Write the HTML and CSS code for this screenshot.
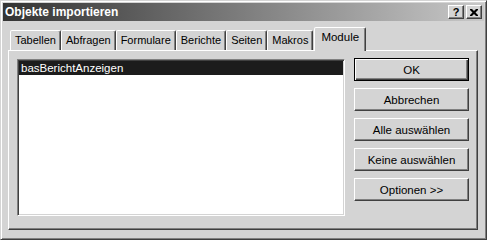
FILE: index.html
```html
<!DOCTYPE html>
<html lang="de">
<head>
  <meta charset="UTF-8">
  <title>Objekte importieren</title>
  <link rel="stylesheet" href="styles.css">
</head>
<body>
  <div class="dialog">
    <div class="titlebar">
      <span class="title">Objekte importieren</span>
      <div class="caption-btns">
        <button class="cap-btn help">?</button>
        <button class="cap-btn close">
          <svg width="8" height="7" viewBox="0 0 8 7">
            <path d="M0 0h2l2 2 2-2h2v1l-2.5 2.5L8 6v1H6L4 5 2 7H0V6l2.5-2.5L0 1z" fill="#000"/>
          </svg>
        </button>
      </div>
    </div>

    <div class="tabs">
      <div class="tab">Tabellen</div>
      <div class="tab">Abfragen</div>
      <div class="tab">Formulare</div>
      <div class="tab">Berichte</div>
      <div class="tab">Seiten</div>
      <div class="tab">Makros</div>
      <div class="tab active">Module</div>
    </div>

    <div class="panel">
      <div class="listbox">
        <div class="item selected">basBerichtAnzeigen</div>
      </div>
      <div class="buttons">
        <button class="btn default">OK</button>
        <button class="btn">Abbrechen</button>
        <button class="btn">Alle auswählen</button>
        <button class="btn">Keine auswählen</button>
        <button class="btn">Optionen &gt;&gt;</button>
      </div>
    </div>
  </div>
</body>
</html>
```

FILE: styles.css
```css
body { margin: 0; background: #d4d4d4; font-family: "Liberation Sans", Arial, sans-serif; font-size: 11px; color: #000; }

.dialog {
  box-sizing: border-box;
  width: 487px;
  height: 240px;
  padding: 2px;
  background: #d4d4d4;
  border: 1px solid;
  border-color: #d4d4d4 #404040 #404040 #d4d4d4;
  box-shadow: inset 1px 1px #fff, inset -1px -1px #808080;
}

/* title bar */
.titlebar {
  height: 18px;
  display: flex;
  align-items: center;
  justify-content: space-between;
  padding: 0 2px 0 2px;
  background: linear-gradient(to right, #333, #c8c8c8);
}
.title { color: #fff; font-weight: bold; font-size: 12px; }
.caption-btns { display: flex; gap: 2px; }
.cap-btn {
  box-sizing: border-box;
  width: 16px;
  height: 14px;
  padding: 0;
  display: flex;
  align-items: center;
  justify-content: center;
  background: #d4d4d4;
  border: 1px solid;
  border-color: #fff #404040 #404040 #fff;
  box-shadow: inset -1px -1px #808080;
  font-family: "Liberation Sans", Arial, sans-serif;
  font-weight: bold;
  font-size: 11px;
  line-height: 1;
}

/* tabs */
.tabs {
  display: flex;
  align-items: flex-end;
  margin: 6px 0 0 7px;
  height: 23px;
  position: relative;
  z-index: 1;
}
.tab {
  box-sizing: border-box;
  height: 20px;
  padding: 3px 4px 0 4px;
  border: 1px solid;
  border-bottom: none;
  border-color: #fff #404040 transparent #fff;
  border-radius: 2px 2px 0 0;
  box-shadow: inset -1px 0 #808080;
  background: #d4d4d4;
  font-size: 11px;
}
.tab.active {
  height: 24px;
  margin-bottom: -1px;
  padding: 3px 6px 0 6px;
  margin-left: 1px;
  font-size: 11.5px;
}

/* panel */
.panel {
  box-sizing: border-box;
  width: 470px;
  height: 180px;
  margin-left: 5px;
  padding: 8px 8px 13px 8px;
  display: flex;
  gap: 9px;
  border: 1px solid;
  border-color: #fff #404040 #404040 #fff;
  box-shadow: inset -1px -1px #808080;
}
.listbox {
  flex: 1;
  background: #fff;
  border: 1px solid;
  border-color: #808080 #fff #fff #808080;
  box-shadow: inset 1px 1px #404040, inset -1px -1px #d4d4d4;
  padding: 1px;
}
.item { height: 14px; line-height: 14px; padding-left: 2px; font-size: 11.5px; }
.item.selected { background: #1c1c1c; color: #fff; }

.buttons { display: flex; flex-direction: column; gap: 7px; margin-top: -1px; }
.btn {
  box-sizing: border-box;
  width: 115px;
  height: 23px;
  padding: 0;
  background: #d4d4d4;
  font-family: "Liberation Sans", Arial, sans-serif;
  font-size: 11.5px;
  color: #000;
  border: 1px solid;
  border-color: #fff #404040 #404040 #fff;
  box-shadow: inset -1px -1px #808080;
}
.btn.default {
  border-color: #000;
  box-shadow: inset 1px 1px #fff, inset -1px -1px #404040, inset -2px -2px #808080;
}
```
